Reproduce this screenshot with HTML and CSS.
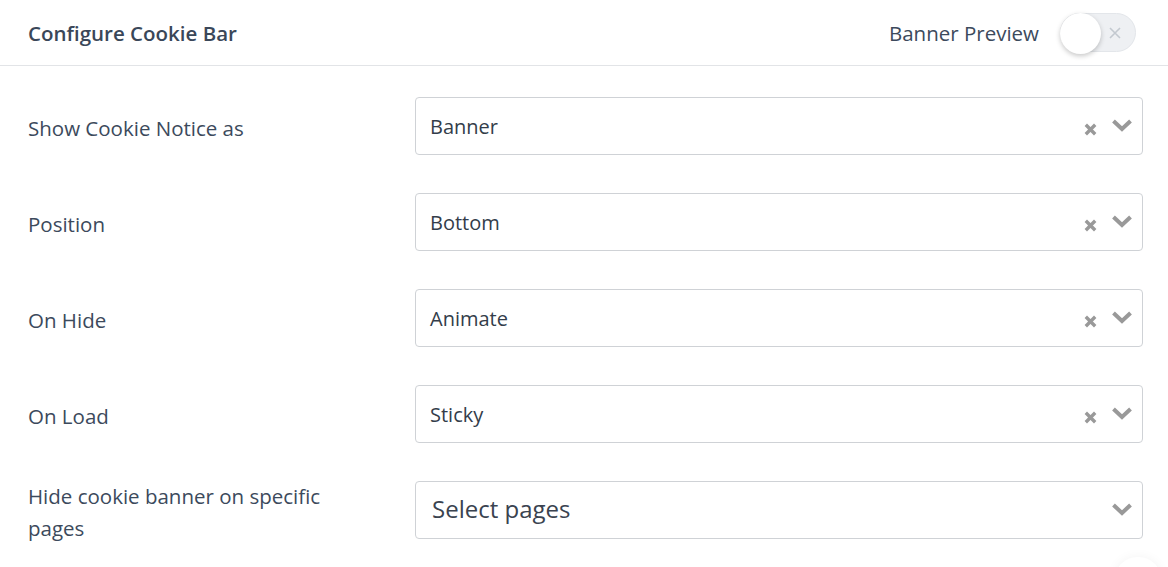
FILE: index.html
```html
<!DOCTYPE html>
<html lang="en">
<head>
<meta charset="UTF-8">
<meta name="viewport" content="width=device-width, initial-scale=1.0">
<title>Configure Cookie Bar</title>
<link rel="stylesheet" href="styles.css">
</head>
<body>
<div class="panel">
  <div class="panel-head">
    <h2>Configure Cookie Bar</h2>
    <div class="preview">
      <span>Banner Preview</span>
      <label class="toggle">
        <span class="knob"></span>
        <svg class="toggle-x" width="12" height="12" viewBox="0 0 12 12"><path d="M1 1L11 11M11 1L1 11" stroke="#c3c9d0" stroke-width="1.6" fill="none"/></svg>
      </label>
    </div>
  </div>

  <div class="panel-body">
    <div class="form-row">
      <div class="form-label">Show Cookie Notice as</div>
      <div class="select">
        <span class="value">Banner</span>
        <span class="icons">
          <svg class="clear" width="13" height="13" viewBox="0 0 13 13"><path d="M1.8 1.8L11.2 11.2M11.2 1.8L1.8 11.2" stroke="#999" stroke-width="3.4" fill="none"/></svg>
          <svg class="arrow" width="22" height="14" viewBox="0 0 22 14"><path d="M2.5 3L11 11L19.5 3" stroke="#999" stroke-width="4" fill="none"/></svg>
        </span>
      </div>
    </div>

    <div class="form-row">
      <div class="form-label">Position</div>
      <div class="select">
        <span class="value">Bottom</span>
        <span class="icons">
          <svg class="clear" width="13" height="13" viewBox="0 0 13 13"><path d="M1.8 1.8L11.2 11.2M11.2 1.8L1.8 11.2" stroke="#999" stroke-width="3.4" fill="none"/></svg>
          <svg class="arrow" width="22" height="14" viewBox="0 0 22 14"><path d="M2.5 3L11 11L19.5 3" stroke="#999" stroke-width="4" fill="none"/></svg>
        </span>
      </div>
    </div>

    <div class="form-row">
      <div class="form-label">On Hide</div>
      <div class="select">
        <span class="value">Animate</span>
        <span class="icons">
          <svg class="clear" width="13" height="13" viewBox="0 0 13 13"><path d="M1.8 1.8L11.2 11.2M11.2 1.8L1.8 11.2" stroke="#999" stroke-width="3.4" fill="none"/></svg>
          <svg class="arrow" width="22" height="14" viewBox="0 0 22 14"><path d="M2.5 3L11 11L19.5 3" stroke="#999" stroke-width="4" fill="none"/></svg>
        </span>
      </div>
    </div>

    <div class="form-row">
      <div class="form-label">On Load</div>
      <div class="select">
        <span class="value">Sticky</span>
        <span class="icons">
          <svg class="clear" width="13" height="13" viewBox="0 0 13 13"><path d="M1.8 1.8L11.2 11.2M11.2 1.8L1.8 11.2" stroke="#999" stroke-width="3.4" fill="none"/></svg>
          <svg class="arrow" width="22" height="14" viewBox="0 0 22 14"><path d="M2.5 3L11 11L19.5 3" stroke="#999" stroke-width="4" fill="none"/></svg>
        </span>
      </div>
    </div>

    <div class="form-row">
      <div class="form-label">Hide cookie banner on specific pages</div>
      <div class="select">
        <span class="value placeholder">Select pages</span>
        <span class="icons">
          <svg class="arrow" width="22" height="14" viewBox="0 0 22 14"><path d="M2.5 3L11 11L19.5 3" stroke="#999" stroke-width="4" fill="none"/></svg>
        </span>
      </div>
    </div>
  </div>
</div>
<div class="fab"></div>
</body>
</html>
```

FILE: styles.css
```css
body { margin: 0; background: #fff; font-family: 'Open Sans', 'Noto Sans', sans-serif; color: #3c4a5c; overflow: hidden; }
.panel-head { display: flex; align-items: center; justify-content: space-between; height: 65px; padding: 0 32px 0 28px; border-bottom: 1px solid #e2e4e7; }
.panel-head h2 { margin: 0; font-size: 20.5px; font-weight: 600; color: #3a4759; }
.preview { display: flex; align-items: center; gap: 21px; font-size: 20.5px; color: #3c4a5c; }
.toggle { position: relative; display: flex; align-items: center; justify-content: flex-end; width: 76px; height: 39px; box-sizing: border-box; padding-right: 14px; border: 1px solid #e3e6ea; border-radius: 20px; background: #eef0f3; }
.knob { position: absolute; left: -1px; top: -1px; width: 41px; height: 41px; border-radius: 50%; background: #fff; box-shadow: 0 2px 5px rgba(0,0,0,0.22); }
.panel-body { padding: 31px 25px 0 28px; }
.form-row { display: grid; grid-template-columns: 387px 1fr; grid-template-rows: 58px; align-items: center; margin-bottom: 38px; }
.form-label { font-size: 20.5px; line-height: 32px; padding-right: 40px; padding-top: 3px; }
.select { display: flex; align-items: center; justify-content: space-between; height: 58px; box-sizing: border-box; padding: 0 9px 0 14px; border: 1px solid #cfd2d6; border-radius: 4px; }
.value { font-size: 20px; color: #333d4a; }
.value.placeholder { font-size: 24px; padding-left: 2px; margin-top: -4px; color: #3a4350; }
.icons { display: flex; align-items: center; gap: 14px; }
.clear { margin-top: 7px; }
.arrow { margin-top: -2px; }
.fab { position: fixed; right: 6px; bottom: -38px; width: 48px; height: 48px; border-radius: 50%; background: #fff; box-shadow: 0 0 12px rgba(0,0,0,0.05); }
```
